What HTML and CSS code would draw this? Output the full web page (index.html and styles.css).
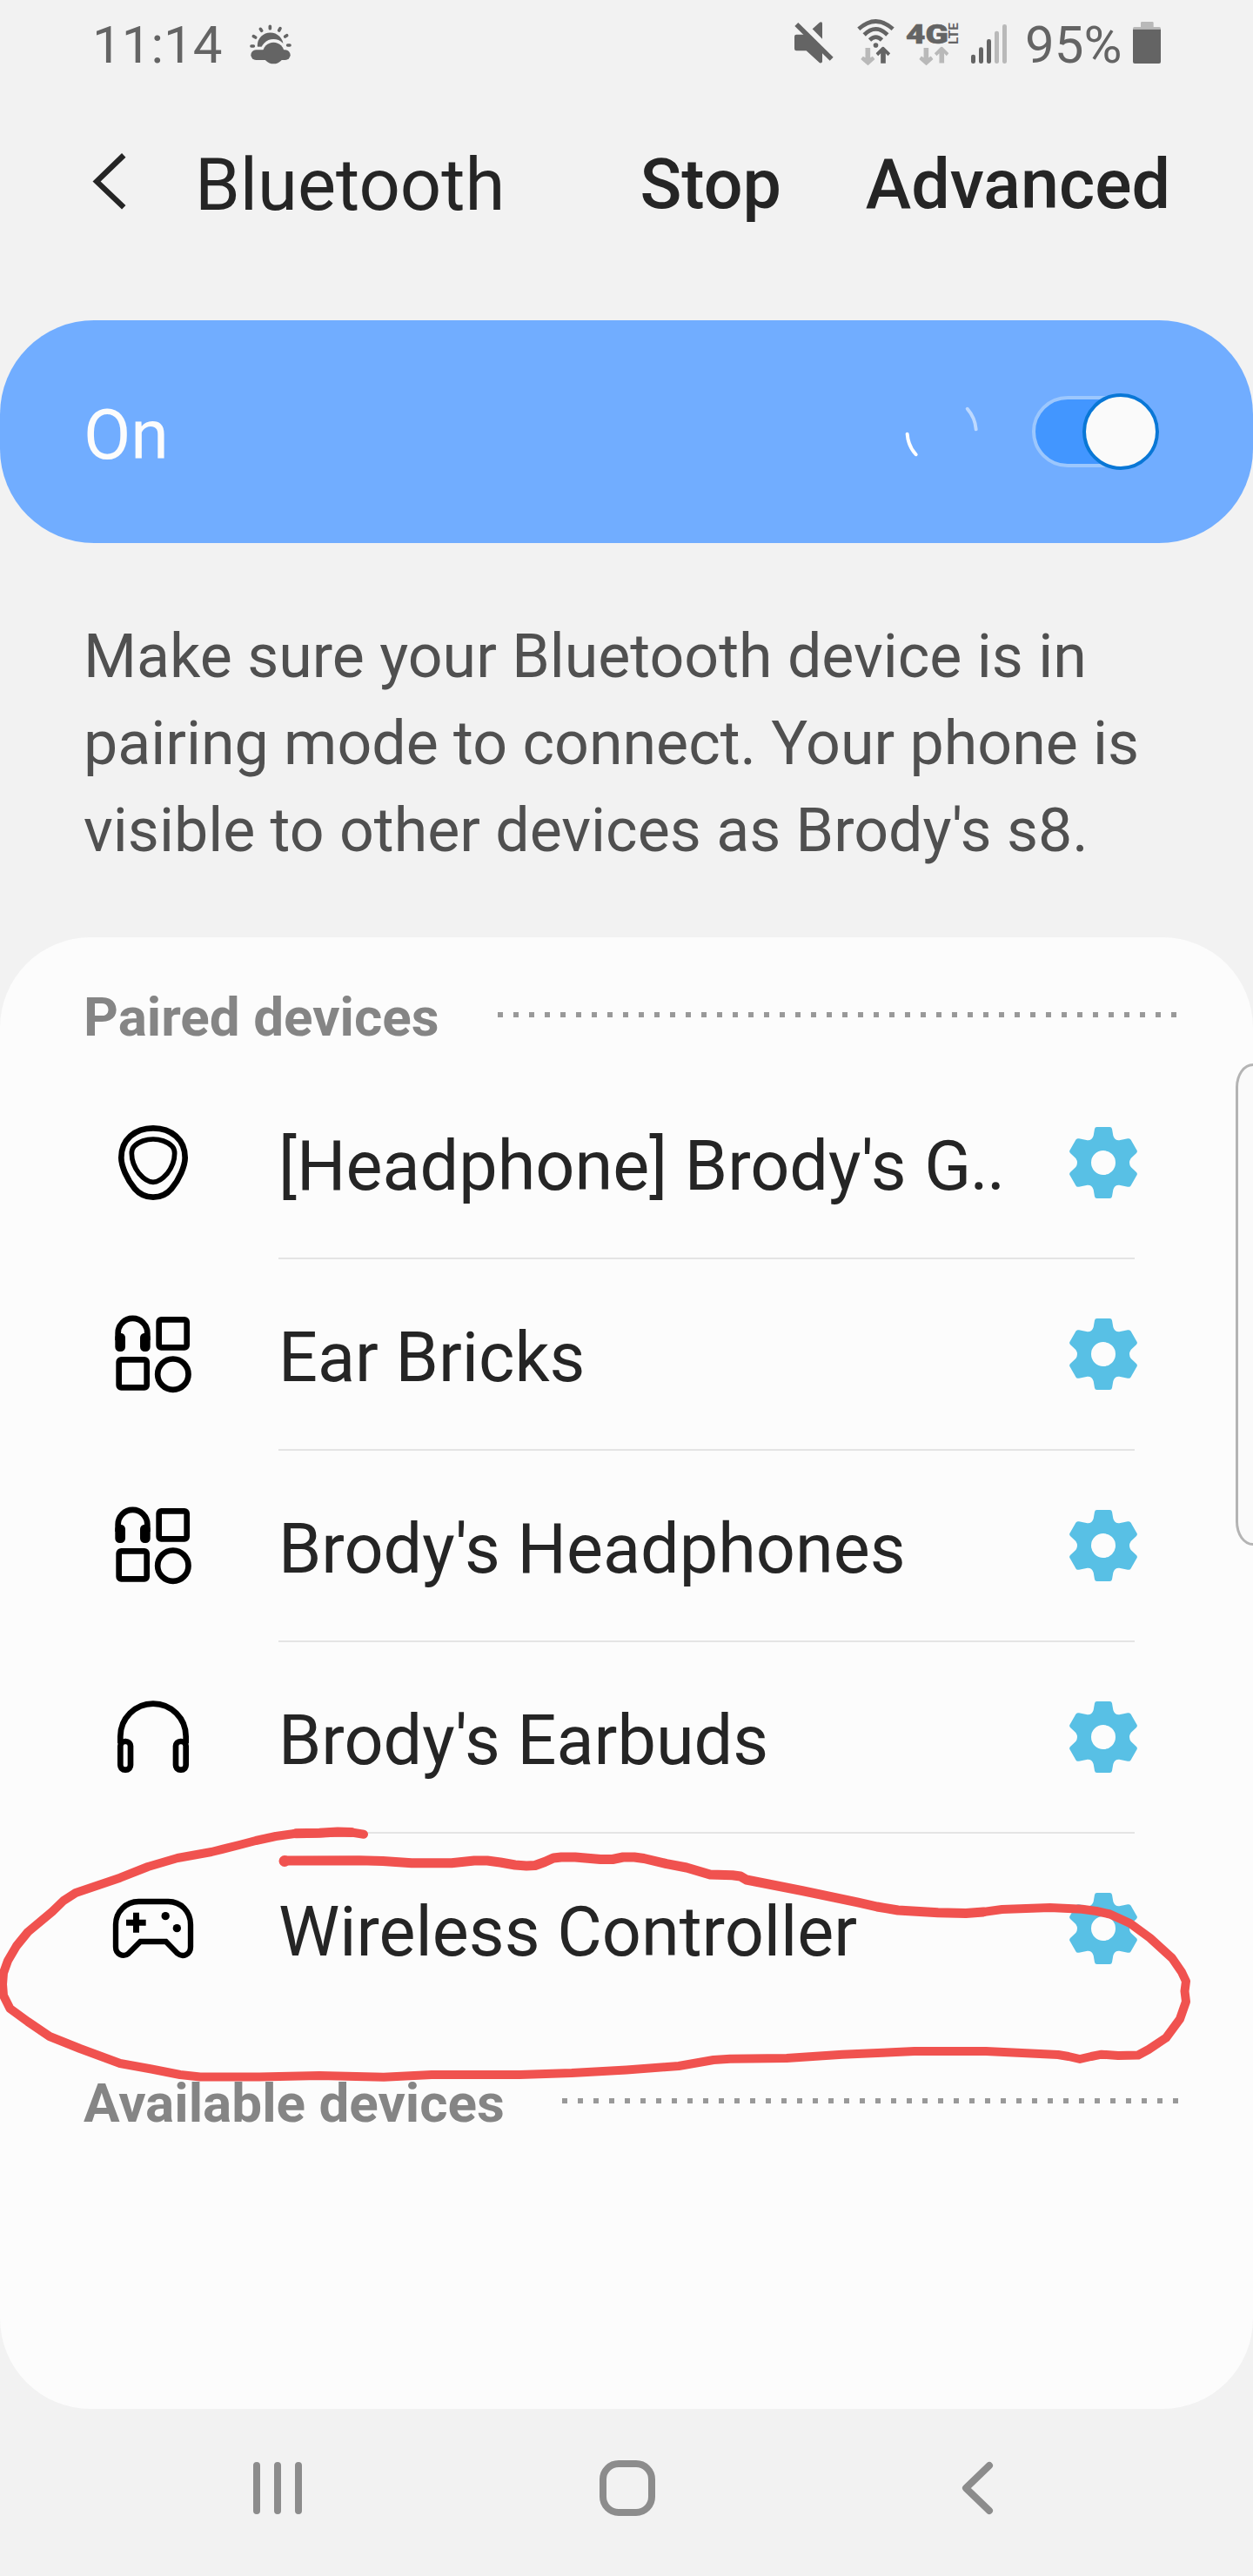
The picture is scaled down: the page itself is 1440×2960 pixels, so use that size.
FILE: index.html
```html
<!DOCTYPE html>
<html lang="en">
<head>
<meta charset="utf-8">
<title>Bluetooth</title>
<link rel="stylesheet" href="styles.css">
</head>
<body>
<svg class="defs" aria-hidden="true">
  <symbol id="gear" viewBox="264 642 240 252">
    <path fill-rule="evenodd" d="M362 645H406Q413 645 414 652L418 675Q423 692 439 691L468 685Q476 683 479 689L500 726Q502 731 498 735L479 753Q469 768 479 783L498 801Q502 805 500 810L479 847Q476 853 468 851L439 845Q423 844 418 861L414 884Q413 891 406 891H362Q355 891 354 884L350 861Q345 844 329 845L300 851Q292 853 289 847L268 810Q266 805 270 801L289 783Q299 768 289 753L270 735Q266 731 268 726L289 689Q292 683 300 685L329 691Q345 692 350 675L354 652Q355 645 362 645ZM384 726A42 42 0 1 0 384 810A42 42 0 1 0 384 726Z"/>
  </symbol>
  <symbol id="device-grid" viewBox="78 708 300 300">
    <g fill="none" stroke="#000" stroke-width="20">
      <path d="M107 810V785A50.500 50.500 0 0 1 208 785V810"/>
      <rect x="248" y="739" width="96" height="96" rx="8"/>
      <rect x="110" y="877" width="96" height="96" rx="8"/>
      <circle cx="296.500" cy="927.500" r="53"/>
    </g>
    <rect x="97" y="785" width="35" height="64" rx="16"/>
    <rect x="183" y="785" width="35" height="64" rx="16"/>
  </symbol>
  <symbol id="arrow-down" viewBox="0 0 50 66"><path d="M16 4H33V38L41 33L49 43L25 65L0 43L8 33L16 38Z"/></symbol>
  <symbol id="arrow-up" viewBox="0 0 50 66"><path d="M17 57V23L8 32L0 23L25 -2L50 23L42 32L34 23V57Z"/></symbol>
</svg>

<header class="status">
  <span class="clock">11:14</span>
  <svg class="weather" viewBox="618 0 150 309">
    <circle cx="692" cy="157" r="44.500"/>
    <circle class="gap" cx="703" cy="180" r="45"/>
    <rect class="gap" x="640" y="161" width="110" height="45"/>
    <rect x="625" y="172" width="136" height="35" rx="17.500"/>
    <circle cx="703" cy="183" r="37"/>
    <path class="rays" d="M627 159H634M634 125L641 129M658 100L662 106M691 91V98M726 98L722 105M749 122L743 126M752 156H759"/>
  </svg>
  <span class="spacer"></span>
  <svg class="mute" viewBox="60 0 150 309">
    <path d="M76 119H105L165 175V212Q164 219 156 217L110 175H76Q69 175 69 168V126Q69 119 76 119ZM131 100L156 77Q165 73 165 81V134Z"/>
    <path class="slash" d="M76 84L197 203"/>
  </svg>
  <svg class="wifi" viewBox="280 0 140 309">
    <g class="waves"><path d="M291 100Q350 47 409 100"/><path d="M310 120Q350 80 390 120"/><path d="M329 138Q350 118 371 138"/></g>
    <circle cx="350" cy="156" r="8.500"/>
    <use class="dim" href="#arrow-down" x="298" y="161" width="50" height="66"/>
    <use href="#arrow-up" x="350" y="161" width="50" height="66"/>
  </svg>
  <svg class="network" viewBox="450 0 190 309">
    <text x="453" y="150" class="gen" textLength="147" lengthAdjust="spacingAndGlyphs">4G</text>
    <text transform="translate(633 153) rotate(-90)" class="lte" textLength="75" lengthAdjust="spacingAndGlyphs">LTE</text>
    <use class="dim" href="#arrow-down" x="499" y="161" width="50" height="66"/>
    <use class="dim" href="#arrow-up" x="552" y="161" width="50" height="66"/>
  </svg>
  <svg class="signal" viewBox="675 0 129 309">
    <rect x="678" y="188" width="15" height="31" rx="7"/>
    <rect x="705" y="163" width="15" height="56" rx="7"/>
    <rect x="732" y="135" width="15" height="84" rx="7"/>
    <rect class="dim" x="759" y="107" width="15" height="112" rx="7"/>
    <rect class="dim" x="786" y="84" width="15" height="135" rx="7"/>
  </svg>
  <span class="percent">95%</span>
  <svg class="battery" viewBox="1233 0 102 309">
    <path class="dim" d="M1263 79Q1263 75 1267 75H1303Q1307 75 1307 79V93H1327Q1332 93 1332 98V101H1236V98Q1236 93 1241 93H1263Z"/>
    <path d="M1236 101H1332V213Q1332 219 1326 219H1242Q1236 219 1236 213Z"/>
  </svg>
</header>

<nav class="toolbar">
  <svg class="back" viewBox="75 525 125 200"><path d="M186 535L93 625L186 714"/></svg>
  <h1>Bluetooth</h1>
  <span class="action stop">Stop</span>
  <span class="action">Advanced</span>
</nav>

<section class="master">
  <span class="state">On</span>
  <svg class="spinner" viewBox="236 342 262 192"><path d="M247 446Q250 488 277 517"/><path class="faded" d="M455 359Q482 390 485 430"/></svg>
  <span class="switch"><span class="knob"></span></span>
</section>

<p class="hint">Make sure your Bluetooth device is in<br>pairing mode to connect. Your phone is<br>visible to other devices as Brody's s8.</p>

<main class="panel">
  <div class="section"><h2>Paired devices</h2><span class="dots paired"></span></div>
  <ul class="devices">
    <li>
      <svg class="icon" viewBox="78 48 300 300"><g fill="none" stroke="#000"><path stroke-width="20" d="M228 79C291 79 338 119 338 181C338 210 318 256 291 288Q267 317 228 317Q190 317 165 288C138 256 118 210 118 181C118 119 165 79 228 79Z"/><path stroke-width="17" d="M228 117C250 117 278 125 294 142C300 149 302 155 302 166C302 190 293 215 276 236Q251 265 228 265Q205 265 180 236C163 215 154 190 154 166C154 155 156 149 162 142C178 125 206 117 228 117Z"/></g></svg>
      <div class="name">[Headphone] Brody's <span class="cut">G..</span></div>
      <svg class="gear"><use href="#gear"/></svg>
    </li>
    <li>
      <svg class="icon"><use href="#device-grid"/></svg>
      <div class="name">Ear Bricks</div>
      <svg class="gear"><use href="#gear"/></svg>
    </li>
    <li>
      <svg class="icon"><use href="#device-grid"/></svg>
      <div class="name">Brody's Headphones</div>
      <svg class="gear"><use href="#gear"/></svg>
    </li>
    <li>
      <svg class="icon" viewBox="78 138 300 300"><g fill="none" stroke="#000" stroke-width="20"><path d="M115 310V286A113 113 0 0 1 341 286V310"/><rect x="115" y="303" width="35" height="98" rx="16"/><rect x="306" y="303" width="35" height="98" rx="16"/></g></svg>
      <div class="name">Brody's Earbuds</div>
      <svg class="gear"><use href="#gear"/></svg>
    </li>
    <li>
      <svg class="icon" viewBox="78 798 300 300"><path fill="none" stroke="#000" stroke-width="19" d="M178 855H280C324 855 357 890 357 934V1012C357 1038 330 1049 312 1034L272 993H184L143 1034C124 1049 99 1036 99 1012V934C99 890 134 855 178 855Z"/><path d="M159 893H180V917H203V938H180V962H159V938H135V917H159Z"/><circle cx="270.500" cy="905" r="14"/><circle cx="310" cy="947" r="14"/></svg>
      <div class="name">Wireless Controller</div>
      <svg class="gear"><use href="#gear"/></svg>
    </li>
  </ul>
  <div class="section later"><h2>Available devices</h2><span class="dots available"></span></div>
</main>

<footer class="navbar">
  <svg viewBox="0 0 66 66"><path d="M9 7V59M33 7V59M57 7V59"/></svg>
  <svg viewBox="0 0 66 66"><rect x="5" y="5" width="56" height="56" rx="18"/></svg>
  <svg viewBox="0 0 66 66"><path d="M47 7L20 33L47 59"/></svg>
</footer>

<span class="edge-handle"></span>

<svg class="scribble" viewBox="0 2080 1440 320">
  <path stroke-width="10" d="M418 2107.700L404 2105.500L388 2105.500L367 2106.300L340 2106.700L317 2110L294 2115L275 2120L243 2128L204 2135L170 2145L138 2157.700L87 2175L73 2184L60 2196.700L32 2220L19 2236L9 2253L4 2267L3 2280L4 2293L11.500 2308L32 2323L57 2340L92 2354L138 2371L174 2377.500L207 2384L230 2386.500L298 2386.500L367 2385L441 2386.700L496 2384L597 2384L657 2382L720 2378.500L780 2374L820 2367L839 2365.700L904 2365L968 2360.700L1051 2357L1133 2357L1216 2361L1228 2363L1241 2366L1254 2363L1266 2360.700L1285 2362L1308 2361.500L1320 2355L1340 2341.700L1356 2320L1363 2300L1361.500 2288L1363 2276.700L1358 2266L1347 2250L1321.500 2226.700L1298.600 2210L1275.600 2199.500L1260 2196L1243.500 2193.700L1206.700 2192L1151.600 2194L1130 2197"/>
  <path stroke-width="11" d="M1130 2197L1110 2198.500L1078 2197.700L1032 2195L1008 2191L986 2186L922 2172.700L857.800 2160L851 2156L841.700 2154.700L816 2154L789 2146L766 2141.700L740 2135.500L729 2134L716 2134L704 2136.500L690 2136.500L661 2134L645 2134L636 2135L626 2139.500L615 2143.500L605 2144L592 2143L575 2140L560 2138L545 2138L519 2140.700L473 2140.700L440 2138.500L413 2137.700L328 2138"/>
  <path stroke-width="11" d="M404 2105.500L388 2105L367 2106.300L340 2106.700"/>
  <circle cx="327" cy="2138.500" r="6.500"/>
</svg>
</body>
</html>
```
FILE: styles.css
```css
* { box-sizing: border-box; }
body { margin: 0; width: 1440px; height: 2960px; position: relative; overflow: hidden; background: #f2f2f2; font-family: Roboto, sans-serif; color: #252525; display: flex; flex-direction: column; }
svg { display: block; flex: none; }
.defs { position: absolute; width: 0; height: 0; }
h1, h2, p, ul { margin: 0; padding: 0; font-weight: 400; }

.status { display: flex; height: 103px; padding: 0 105px 0 106px; align-items: center; color: #646464; fill: #646464; font-size: 60px; line-height: 103px; }
.status svg { height: 103px; }
.clock { width: 180px; white-space: nowrap; }
.weather { width: 50px; }
.gap { fill: #f2f2f2; }
.rays { stroke: #646464; stroke-width: 11px; stroke-linecap: round; }
.spacer { flex: 1; }
.dim { fill: #b9b9b9; }
.mute { width: 50px; margin-right: 23px; }
.slash { stroke: #646464; stroke-width: 17px; }
.wifi { width: 47px; margin-right: 10px; }
.waves { fill: none; stroke: #646464; stroke-width: 14px; }
.network { width: 63px; margin-right: 12px; }
.gen { font-size: 97px; font-weight: 900; stroke: #646464; stroke-width: 2px; }
.lte { font-size: 42px; font-weight: 700; }
.signal { width: 43px; margin-right: 20px; }
.percent { width: 123px; white-space: nowrap; }
.battery { width: 34px; }

.toolbar { display: flex; align-items: center; height: 218px; padding: 0 95px 0 105px; }
.back { width: 42px; height: 67px; margin-right: 77px; margin-top: -7px; fill: none; stroke: #252525; stroke-width: 19px; }
h1 { font-size: 83.200px; flex: 1; }
.action { font-size: 79px; font-weight: 500; }
.stop { margin-right: 97px; }

.master { display: flex; align-items: center; height: 256px; margin-top: 47px; padding: 0 108px 0 96px; border-radius: 108px; background: #71adff; color: #fcfcfc; }
.state { flex: 1; font-size: 79px; padding-top: 7px; }
.spinner { width: 87px; height: 64px; margin-right: 60px; fill: none; stroke: #fff; stroke-width: 12px; stroke-linecap: round; }
.faded { stroke: #bdd9ff; }
.switch { display: flex; justify-content: flex-end; align-items: center; width: 146px; height: 82px; border: 4px solid #9cc7fd; border-radius: 41px; background: #4296ff; }
.knob { flex: none; width: 88px; height: 88px; margin-right: -4px; border: 4px solid #0977d6; border-radius: 50%; background: #fafafa; }

.hint { height: 453px; padding: 80px 96px 0; font-size: 69.900px; line-height: 100px; color: #505050; white-space: nowrap; }

.panel { height: 1691px; border-radius: 104px; background: #fcfcfc; }
.section { display: flex; align-items: center; justify-content: space-between; height: 149px; padding: 29px 88px 0 96px; }
.later { padding-top: 27px; }
h2 { font-size: 62px; line-height: 80px; font-weight: 700; color: #858585; padding-top: 5px; }
.dots { height: 6px; background: repeating-linear-gradient(90deg, #999 0 6px, transparent 6px 18px); }
.paired { width: 780px; }
.available { width: 708px; margin-right: -2px; }
.devices { list-style: none; }
.devices li { display: flex; align-items: center; height: 220px; padding: 0 132px 0 126px; }
.icon { width: 100px; height: 100px; margin-right: 94px; }
.name { flex: 1; align-self: flex-start; height: 221px; font-size: 79.200px; line-height: 220px; padding-top: 4px; white-space: nowrap; border-bottom: 2px solid #e4e4e4; margin-right: -76px; }
.cut { letter-spacing: -1.500px; margin-left: 1px; }
.devices li:last-child .name { border-color: transparent; }
.gear { width: 80px; height: 84px; fill: #58c0e5; }

.navbar { display: flex; justify-content: space-between; height: 192px; padding: 58px 284px 0 286px; }
.navbar svg { width: 66px; height: 66px; fill: none; stroke: #8c8c8c; stroke-width: 8px; stroke-linecap: round; stroke-linejoin: round; }

.edge-handle { position: absolute; left: 1420px; top: 1222px; width: 40px; height: 554px; border: 3px solid #b4b4b4; border-radius: 22px / 30px; background: #fafafa; }
.scribble { position: absolute; left: 0; top: 2080px; width: 1440px; height: 320px; fill: none; stroke: #f0524f; stroke-linecap: round; stroke-linejoin: round; filter: blur(0.6px); }
.scribble circle { fill: #f0524f; stroke: none; }
```
